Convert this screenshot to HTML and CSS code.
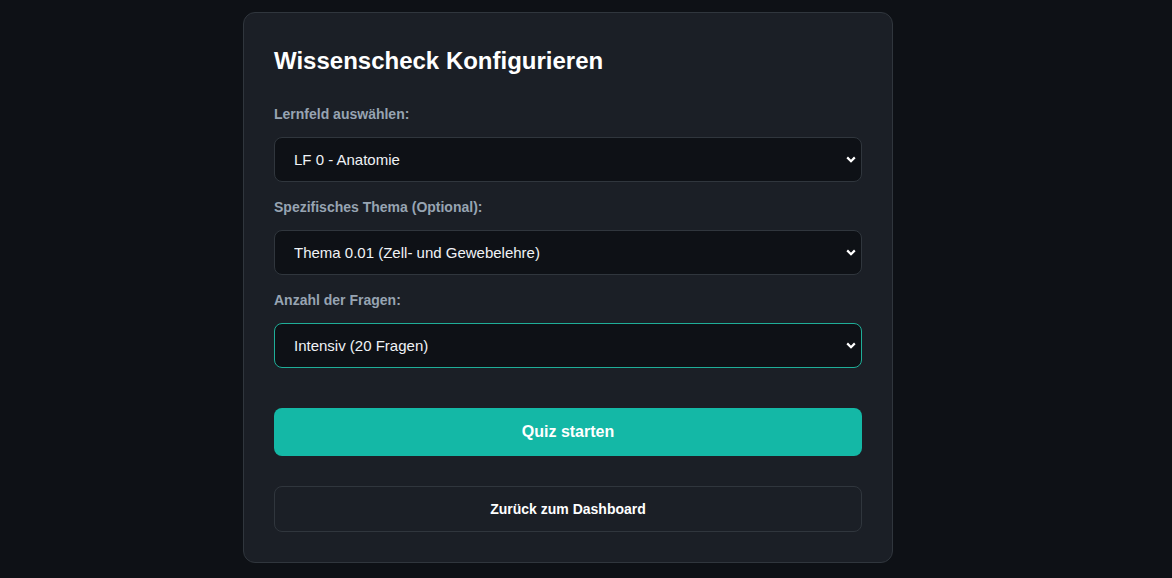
FILE: index.html
```html
<!DOCTYPE html>
<html lang="de">

<head>
    <meta charset="UTF-8">
    <meta name="viewport" content="width=device-width, initial-scale=1.0">
    <title>Wissenscheck</title>
    <link rel="stylesheet" href="styles.css">
</head>

<body>
    <main class="page">
        <div class="card">
            <h2 class="card-title">Wissenscheck Konfigurieren</h2>

            <div class="field">
                <label for="lernfeld">Lernfeld auswählen:</label>
                <select id="lernfeld">
                    <option>LF 0 - Anatomie</option>
                </select>
            </div>

            <div class="field">
                <label for="thema">Spezifisches Thema (Optional):</label>
                <select id="thema">
                    <option>Thema 0.01 (Zell- und Gewebelehre)</option>
                </select>
            </div>

            <div class="field">
                <label for="anzahl">Anzahl der Fragen:</label>
                <select id="anzahl" class="active">
                    <option>Intensiv (20 Fragen)</option>
                </select>
            </div>

            <button class="btn-start">Quiz starten</button>
            <button class="btn-back">Zurück zum Dashboard</button>
        </div>
    </main>
</body>

</html>
```

FILE: styles.css
```css
* {
    margin: 0;
    padding: 0;
    box-sizing: border-box;
}

body {
    background-color: #0e1116;
    font-family: "Liberation Sans", Arial, sans-serif;
    color: #f0f3f6;
}

.page {
    display: flex;
    justify-content: center;
    padding: 12px 36px 0 0;
}

.card {
    width: 650px;
    padding: 30px;
    background-color: #1b1f26;
    border: 1px solid #30363d;
    border-radius: 12px;
    display: flex;
    flex-direction: column;
}

.card-title {
    font-size: 24px;
    line-height: 28px;
    font-weight: bold;
    color: #ffffff;
    margin: 4px 0 31px 0;
}

.field {
    display: flex;
    flex-direction: column;
    margin-bottom: 17px;
}

.field label {
    font-size: 14px;
    line-height: 16px;
    font-weight: bold;
    color: #97a4b2;
    margin-bottom: 15px;
}

.field select {
    appearance: none;
    -webkit-appearance: none;
    height: 45px;
    padding: 0 30px 0 19px;
    font-family: "Liberation Sans", Arial, sans-serif;
    font-size: 15px;
    color: #f0f3f6;
    background-color: #0e1116;
    background-image: url("data:image/svg+xml,%3Csvg xmlns='http://www.w3.org/2000/svg' width='10' height='7' viewBox='0 0 10 7'%3E%3Cpath d='M1.2 1.4 5 5.2 8.8 1.4' fill='none' stroke='%23ffffff' stroke-width='2.2'/%3E%3C/svg%3E");
    background-repeat: no-repeat;
    background-position: right 5px center;
    border: 1px solid #30363d;
    border-radius: 8px;
    outline: none;
}

.field select.active {
    border-color: #1fae98;
}

.btn-start {
    margin-top: 23px;
    height: 48px;
    border: none;
    border-radius: 8px;
    background-color: #14b8a6;
    color: #ffffff;
    font-family: "Liberation Sans", Arial, sans-serif;
    font-size: 16px;
    font-weight: bold;
}

.btn-back {
    margin-top: 30px;
    height: 46px;
    border: 1px solid #30363d;
    border-radius: 8px;
    background-color: transparent;
    color: #ffffff;
    font-family: "Liberation Sans", Arial, sans-serif;
    font-size: 14px;
    font-weight: bold;
}
```
